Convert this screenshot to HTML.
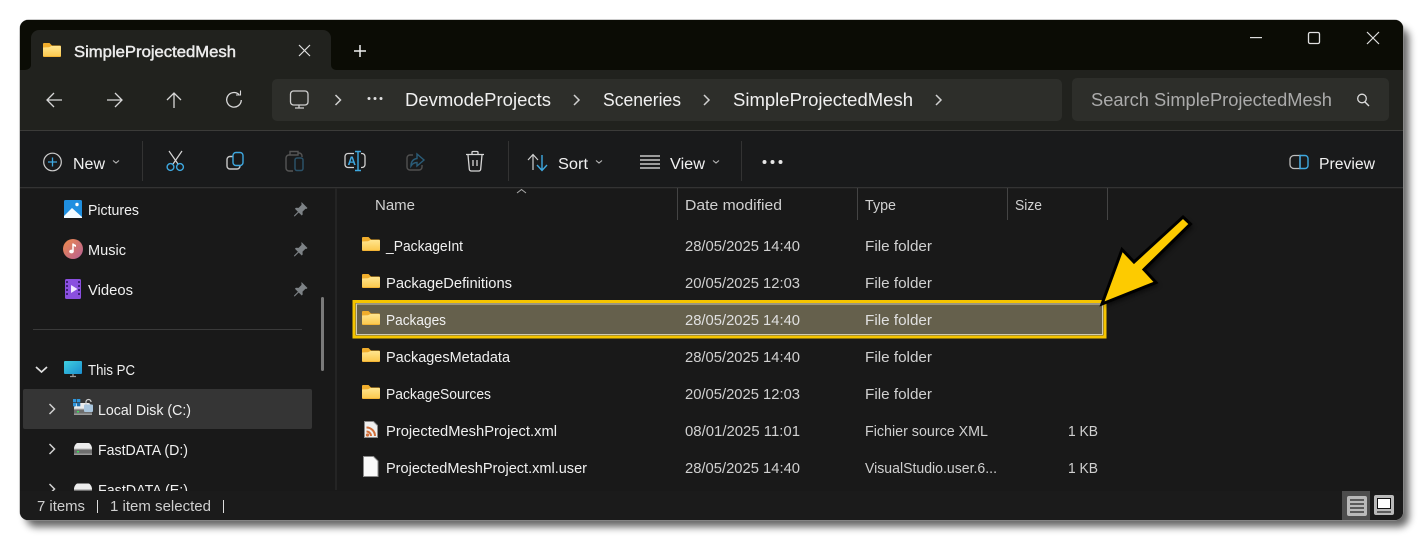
<!DOCTYPE html>
<html><head><meta charset="utf-8"><style>
html,body{margin:0;padding:0;background:#fff;width:1423px;height:540px;overflow:hidden}
svg{display:block}
text{font-family:"Liberation Sans",sans-serif;fill:#f0f0f0;font-size:14.5px}
.s{fill:none;stroke:#d8d8d8;stroke-width:1.3}
.b{fill:none;stroke:#3ea8e0;stroke-width:1.4}
.g{fill:#e0e0e0}
</style></head><body>
<svg width="1423" height="540" viewBox="0 0 1423 540" xmlns="http://www.w3.org/2000/svg">
<defs>
<filter id="sh" x="-5%" y="-5%" width="110%" height="112%"><feGaussianBlur stdDeviation="4"/></filter>
<filter id="as" x="-30%" y="-30%" width="160%" height="160%"><feGaussianBlur stdDeviation="2"/></filter>
<linearGradient id="fo" x1="0" y1="0" x2="0" y2="1"><stop offset="0" stop-color="#ffe58f"/><stop offset="1" stop-color="#fbc94f"/></linearGradient>
<linearGradient id="mu" x1="0" y1="0" x2="1" y2="1"><stop offset="0" stop-color="#ee8a4a"/><stop offset="1" stop-color="#b55f96"/></linearGradient>
<linearGradient id="pc" x1="0" y1="0" x2="1" y2="1"><stop offset="0" stop-color="#3fd0e0"/><stop offset="1" stop-color="#1b8fd0"/></linearGradient>
<g id="folder"><path d="M0 1a1 1 0 0 1 1-1h5.500l2.500 2.500h8a1 1 0 0 1 1 1v9.500a1 1 0 0 1-1 1H1a1 1 0 0 1-1-1z" fill="#f0ad2c"/><path d="M0 4.500l6-.2 2.500-1.300H17a1 1 0 0 1 1 1v9.200H0z" fill="url(#fo)"/></g>
<g id="pin"><path d="M7.500 0l6 6-1.200 1-.8-.2-3 3 .2 2.700-1 1-3-3-3.800 3.800-.9.1.1-.9 3.800-3.800-3-3 1-1 2.700.2 3-3-.2-.8z" fill="#7d8286"/></g>
<g id="drive"><path d="M3.500 0h11c1.500 0 3.500 3 3.500 5.500H0C0 3 2 0 3.500 0z" fill="#ececec"/><rect x="0" y="5.500" width="18" height="6.500" rx="1" fill="#6e6e6e"/><rect x="0" y="5.500" width="18" height="1" fill="#bdbdbd"/><rect x="3" y="8" width="2" height="1.500" fill="#3ddc5a"/><rect x="0" y="10.500" width="18" height="1.500" fill="#9a9a9a"/></g>
<path id="chev" d="M0 0l5 5-5 5" fill="none" stroke="#d0d0d0" stroke-width="1.500"/>
</defs>

<rect x="26" y="28" width="1383" height="499" rx="10" fill="#000" opacity=".6" filter="url(#sh)"/>
<rect x="19.500" y="19.500" width="1384" height="501" rx="9" fill="#9a9a9a"/>
<rect x="20" y="20" width="1383" height="500" rx="8" fill="#191919"/>
<path d="M20 70V28a8 8 0 0 1 8-8h1367a8 8 0 0 1 8 8v42z" fill="#0b0c05"/>
<rect x="20" y="70" width="1383" height="60" fill="#21221e"/>
<path d="M31 70V38a8 8 0 0 1 8-8h284a8 8 0 0 1 8 8v32z" fill="#21221e"/>
<path d="M25 70a6 5 0 0 0 6-5v5zM331 65a5 5 0 0 0 5 5h-5z" fill="#21221e"/>
<rect x="20" y="130" width="1383" height="1.300" fill="#3b3b39"/>
<rect x="20" y="131" width="1383" height="56" fill="#191a1b"/>
<rect x="20" y="187" width="1383" height="1.300" fill="#333"/>
<rect x="335" y="188" width="2" height="302" fill="#242424"/>

<!-- Tab -->
<use href="#folder" x="43" y="43"/>
<text x="74" y="57" textLength="162" lengthAdjust="spacingAndGlyphs" style="font-size:16px;fill:#ececec;stroke:#ececec;stroke-width:.45">SimpleProjectedMesh</text>
<path d="M299 45l11 11M310 45l-11 11" stroke="#e0e0e0" stroke-width="1.200"/>
<path d="M360 45v12M354 51h12" stroke="#eee" stroke-width="1.500"/>

<!-- Window controls -->
<rect x="1250" y="37" width="12" height="1.200" fill="#ddd"/>
<rect x="1308.500" y="32.500" width="11" height="11" rx="1.500" fill="none" stroke="#e0e0e0" stroke-width="1.300"/>
<path d="M1367 32l12 12M1379 32l-12 12" stroke="#e0e0e0" stroke-width="1.200"/>

<!-- Nav -->
<path d="M62 100H47M54 93l-7 7 7 7" class="s"/>
<path d="M107 100h15M115 93l7 7-7 7" class="s"/>
<path d="M174 108V93M167 100l7-7 7 7" class="s"/>
<path d="M239 94.500a7.300 7.300 0 1 0 2.300 5.500" class="s"/><path d="M240.500 90.500v4.500h-4.500" class="s" style="stroke-width:1.100"/>

<!-- Address -->
<rect x="272" y="79" width="790" height="42" rx="5" fill="#2d2e2a"/>
<rect x="290.500" y="91" width="17.500" height="14" rx="3" class="s" style="stroke:#cfcfcf"/>
<path d="M295 108h9M299 105v3" class="s" style="stroke:#cfcfcf"/>
<use href="#chev" x="335.500" y="95"/>
<circle cx="369" cy="98.500" r="1.500" class="g"/><circle cx="375" cy="98.500" r="1.500" class="g"/><circle cx="381" cy="98.500" r="1.500" class="g"/>
<text x="405" y="106" textLength="146" lengthAdjust="spacingAndGlyphs" style="font-size:18px">DevmodeProjects</text>
<use href="#chev" x="574" y="95"/>
<text x="603" y="106" textLength="78" lengthAdjust="spacingAndGlyphs" style="font-size:18px">Sceneries</text>
<use href="#chev" x="704" y="95"/>
<text x="733" y="106" textLength="180" lengthAdjust="spacingAndGlyphs" style="font-size:18px">SimpleProjectedMesh</text>
<use href="#chev" x="936" y="95"/>

<!-- Search -->
<rect x="1072" y="78" width="317" height="43" rx="5" fill="#2d2e2a"/>
<text x="1091" y="106" textLength="241" lengthAdjust="spacingAndGlyphs" style="font-size:18px;fill:#ababab">Search SimpleProjectedMesh</text>
<circle cx="1362" cy="98.500" r="4.300" fill="none" stroke="#ddd" stroke-width="1.300"/><path d="M1365 102l4 4" stroke="#ddd" stroke-width="1.400"/>

<!-- Command bar -->
<circle cx="52.500" cy="162" r="8.800" fill="none" stroke="#cfcfcf" stroke-width="1.200"/>
<path d="M52.500 157.500v9M48 162h9" stroke="#3ea8e0" stroke-width="1.300"/>
<text x="73" y="169" textLength="32" lengthAdjust="spacingAndGlyphs" style="font-size:15.500px">New</text>
<path d="M113 160.500l3 2.500 3-2.500" fill="none" stroke="#bbb" stroke-width="1.100"/>
<rect x="142" y="141" width="1" height="40" fill="#333"/>

<path d="M169 151l9 13M182 151l-9 13" stroke="#d6d6d6" stroke-width="1.200"/>
<circle cx="170.500" cy="167" r="3.400" class="b"/><circle cx="180" cy="167" r="3.400" class="b"/>

<path d="M233 156.500h-3a3 3 0 0 0-3 3v6.500a3 3 0 0 0 3 3h7a3 3 0 0 0 3-3" fill="none" stroke="#c8c8c8" stroke-width="1.400"/>
<rect x="233" y="152.500" width="10" height="13" rx="3" class="b"/>

<path d="M291 155h-2a3 3 0 0 0-3 3v10a3 3 0 0 0 3 3h4M302 157v-1a3 3 0 0 0-3-3h-1M290 155v-3.500h8v3.500z" fill="none" stroke="#555" stroke-width="1.400"/>
<rect x="295" y="158" width="8" height="12.500" rx="2" fill="none" stroke="#2a5168" stroke-width="1.500"/>

<path d="M354 153.500h-6a3 3 0 0 0-3 3v8a3 3 0 0 0 3 3h6M361 153.500h1a3 3 0 0 1 3 3v8a3 3 0 0 1-3 3h-1" fill="none" stroke="#d0d0d0" stroke-width="1.300"/>
<path d="M358 152v18M355 151.500h6M355 170.500h6" stroke="#3ea8e0" stroke-width="1.400" fill="none"/>
<text x="347.500" y="165" textLength="8.500" lengthAdjust="spacingAndGlyphs" style="font-size:12px;font-weight:bold;fill:#3ea8e0">A</text>

<path d="M413 155h-3a3 3 0 0 0-3 3v9a3 3 0 0 0 3 3h9a3 3 0 0 0 3-3v-2" fill="none" stroke="#505050" stroke-width="1.400"/>
<path d="M411 166c0-5 3-7 6-7.500v-4.500l7 6-7 6v-3.500c-2.500 0-4.500 1-6 3.500z" fill="none" stroke="#2a5c78" stroke-width="1.400"/>

<path d="M466 154.500h18M472 154.500v-2a1 1 0 0 1 1-1h4a1 1 0 0 1 1 1v2M468 155l1.300 14a2 2 0 0 0 2 2h7.400a2 2 0 0 0 2-2l1.300-14M473 160v6M477 160v6" fill="none" stroke="#d6d6d6" stroke-width="1.300"/>
<rect x="508" y="141" width="1" height="40" fill="#333"/>

<path d="M533 170v-15M528 160l5-5.500 5 5.500" fill="none" stroke="#d0d0d0" stroke-width="1.200"/>
<path d="M542 155v15M537 165l5 5.500 5-5.500" fill="none" stroke="#3ea8e0" stroke-width="1.400"/>
<text x="558" y="169" textLength="30" lengthAdjust="spacingAndGlyphs" style="font-size:15.500px">Sort</text>
<path d="M596 160.500l3 2.500 3-2.500" fill="none" stroke="#bbb" stroke-width="1.100"/>
<path d="M640 156h20M640 160h20M640 164h20M640 168h20" stroke="#c8c8c8" stroke-width="1.500"/>
<text x="670" y="169" textLength="35" lengthAdjust="spacingAndGlyphs" style="font-size:15.500px">View</text>
<path d="M713 160.500l3 2.500 3-2.500" fill="none" stroke="#bbb" stroke-width="1.100"/>
<rect x="741" y="141" width="1" height="40" fill="#333"/>
<circle cx="764.500" cy="162" r="2" fill="#e6e6e6"/><circle cx="772.500" cy="162" r="2" fill="#e6e6e6"/><circle cx="780.500" cy="162" r="2" fill="#e6e6e6"/>

<path d="M1300 155.500h-6a4 4 0 0 0-4 4v5a4 4 0 0 0 4 4h6z" fill="none" stroke="#bdbdbd" stroke-width="1.300"/>
<path d="M1300 155.500h5a3 3 0 0 1 3 3v7a3 3 0 0 1-3 3h-5z" fill="none" stroke="#3ea8e0" stroke-width="1.400"/>
<text x="1319" y="169" textLength="56" lengthAdjust="spacingAndGlyphs" style="font-size:15.500px">Preview</text>

<!-- Sidebar -->
<rect x="64" y="200" width="18" height="18" rx="1.500" fill="#1f8fe0"/>
<path d="M64 218v-2l8-8 10 9v1z" fill="#f4fbff"/><circle cx="77" cy="204.500" r="1.700" fill="#fff"/>
<text x="88" y="215" textLength="51" lengthAdjust="spacingAndGlyphs">Pictures</text>
<use href="#pin" x="294" y="202"/>
<circle cx="73" cy="249" r="10" fill="url(#mu)"/>
<path d="M73 243.500v8" stroke="#fff" stroke-width="1.500"/><ellipse cx="71.500" cy="251.500" rx="2.300" ry="1.900" fill="#fff"/><path d="M73 243.500l3 1.500v2l-3-1.200z" fill="#fff"/>
<text x="88" y="255" textLength="38" lengthAdjust="spacingAndGlyphs">Music</text>
<use href="#pin" x="294" y="242"/>
<rect x="65" y="279" width="16" height="20" rx="1.500" fill="#8a4fdf"/>
<path d="M71 285l6.500 4-6.500 4z" fill="#f0e6ff"/>
<path d="M67 281v16M79 281v16" stroke="#3f1f7a" stroke-width="2" stroke-dasharray="2 2"/>
<text x="88" y="295" textLength="45" lengthAdjust="spacingAndGlyphs">Videos</text>
<use href="#pin" x="294" y="282"/>
<rect x="33" y="329" width="269" height="1" fill="#3a3a3a"/>
<rect x="321" y="297" width="3" height="74" rx="1.500" fill="#7a7a7a"/>
<path d="M36 367l5.500 5 5.500-5" fill="none" stroke="#e0e0e0" stroke-width="1.700"/>
<rect x="64" y="361" width="18" height="13" rx="1" fill="url(#pc)"/><path d="M70 376.500h6M73 374v2.500" stroke="#9a9a9a" stroke-width="1.300"/>
<text x="88" y="375" textLength="47" lengthAdjust="spacingAndGlyphs" style="font-size:15px">This PC</text>
<rect x="23" y="389" width="289" height="40" rx="2" fill="#353535"/>
<use href="#chev" x="49.500" y="404"/>
<use href="#drive" x="74" y="403"/>
<rect x="73" y="399" width="3.300" height="3.300" fill="#2f96dc"/><rect x="77" y="399" width="3.300" height="3.300" fill="#2f96dc"/><rect x="73" y="403" width="3.300" height="3.300" fill="#2f96dc"/><rect x="77" y="403" width="3.300" height="3.300" fill="#1b6fb0"/>
<path d="M86 405v-3a2.500 2.500 0 0 1 5 0" fill="none" stroke="#cfcfcf" stroke-width="1.200"/><rect x="84" y="404.500" width="9" height="7.500" rx="1" fill="#a9c6de"/>
<text x="98" y="415" textLength="93" lengthAdjust="spacingAndGlyphs">Local Disk (C:)</text>
<use href="#chev" x="49.500" y="444"/>
<use href="#drive" x="74" y="443"/>
<text x="98" y="455" textLength="90" lengthAdjust="spacingAndGlyphs">FastDATA (D:)</text>
<use href="#chev" x="49.500" y="484"/>
<use href="#drive" x="74" y="483.500"/>
<text x="98" y="495" textLength="90" lengthAdjust="spacingAndGlyphs">FastDATA (E:)</text>

<!-- Headers -->
<path d="M517 193l4.500-3.500 4.500 3.500" fill="none" stroke="#aaa" stroke-width="1"/>
<text x="375" y="210" textLength="40" lengthAdjust="spacingAndGlyphs" style="fill:#d0d0d0">Name</text>
<rect x="677" y="188" width="1" height="32" fill="#444"/>
<text x="685" y="210" textLength="97" lengthAdjust="spacingAndGlyphs" style="fill:#d0d0d0">Date modified</text>
<rect x="857" y="188" width="1" height="32" fill="#444"/>
<text x="865" y="210" textLength="31" lengthAdjust="spacingAndGlyphs" style="fill:#d0d0d0">Type</text>
<rect x="1007" y="188" width="1" height="32" fill="#444"/>
<text x="1015" y="210" textLength="27" lengthAdjust="spacingAndGlyphs" style="fill:#d0d0d0">Size</text>
<rect x="1107" y="188" width="1" height="32" fill="#444"/>

<!-- Highlight -->
<rect x="354" y="301.500" width="751" height="35.500" fill="#65604c" stroke="#f5c400" stroke-width="3"/>
<rect x="356.500" y="304" width="746" height="30.500" fill="none" stroke="#cfcab4" stroke-width="1"/>

<!-- Rows -->
<use href="#folder" x="362" y="237"/>
<text x="386" y="251" textLength="77" lengthAdjust="spacingAndGlyphs">_PackageInt</text>
<text x="685" y="251" textLength="115" lengthAdjust="spacingAndGlyphs" style="fill:#d0d0d0">28/05/2025 14:40</text>
<text x="865" y="251" textLength="67" lengthAdjust="spacingAndGlyphs" style="fill:#d0d0d0">File folder</text>

<use href="#folder" x="362" y="274"/>
<text x="386" y="288" textLength="126" lengthAdjust="spacingAndGlyphs">PackageDefinitions</text>
<text x="685" y="288" textLength="115" lengthAdjust="spacingAndGlyphs" style="fill:#d0d0d0">20/05/2025 12:03</text>
<text x="865" y="288" textLength="67" lengthAdjust="spacingAndGlyphs" style="fill:#d0d0d0">File folder</text>

<use href="#folder" x="362" y="311"/>
<text x="386" y="325" textLength="60" lengthAdjust="spacingAndGlyphs">Packages</text>
<text x="685" y="325" textLength="115" lengthAdjust="spacingAndGlyphs" style="fill:#e0e0e0">28/05/2025 14:40</text>
<text x="865" y="325" textLength="67" lengthAdjust="spacingAndGlyphs" style="fill:#e0e0e0">File folder</text>

<use href="#folder" x="362" y="348"/>
<text x="386" y="362" textLength="124" lengthAdjust="spacingAndGlyphs">PackagesMetadata</text>
<text x="685" y="362" textLength="115" lengthAdjust="spacingAndGlyphs" style="fill:#d0d0d0">28/05/2025 14:40</text>
<text x="865" y="362" textLength="67" lengthAdjust="spacingAndGlyphs" style="fill:#d0d0d0">File folder</text>

<use href="#folder" x="362" y="385"/>
<text x="386" y="399" textLength="105" lengthAdjust="spacingAndGlyphs">PackageSources</text>
<text x="685" y="399" textLength="115" lengthAdjust="spacingAndGlyphs" style="fill:#d0d0d0">20/05/2025 12:03</text>
<text x="865" y="399" textLength="67" lengthAdjust="spacingAndGlyphs" style="fill:#d0d0d0">File folder</text>

<path d="M364.500 421.500h9l4 4v12h-13z" fill="#efefef" stroke="#8a8a8a"/>
<path d="M366.500 427.500a8.500 8.500 0 0 1 8.500 8.500M366.500 431.500a4.500 4.500 0 0 1 4.500 4.500" fill="none" stroke="#d2703a" stroke-width="2"/><circle cx="367.500" cy="435" r="1.600" fill="#d2703a"/>
<text x="386" y="436" textLength="171" lengthAdjust="spacingAndGlyphs">ProjectedMeshProject.xml</text>
<text x="685" y="436" textLength="115" lengthAdjust="spacingAndGlyphs" style="fill:#d0d0d0">08/01/2025 11:01</text>
<text x="865" y="436" textLength="123" lengthAdjust="spacingAndGlyphs" style="fill:#d0d0d0">Fichier source XML</text>
<text x="1068" y="436" textLength="30" lengthAdjust="spacingAndGlyphs" style="fill:#d0d0d0">1 KB</text>

<path d="M363.500 456.500h10l4.500 4.500v15.500h-14.500z" fill="#fafafa" stroke="#8a8a8a"/>
<text x="386" y="473" textLength="201" lengthAdjust="spacingAndGlyphs">ProjectedMeshProject.xml.user</text>
<text x="685" y="473" textLength="115" lengthAdjust="spacingAndGlyphs" style="fill:#d0d0d0">28/05/2025 14:40</text>
<text x="865" y="473" textLength="132" lengthAdjust="spacingAndGlyphs" style="fill:#d0d0d0">VisualStudio.user.6...</text>
<text x="1068" y="473" textLength="30" lengthAdjust="spacingAndGlyphs" style="fill:#d0d0d0">1 KB</text>

<!-- Arrow -->
<path d="M1183 217l7.500 7-46.500 45.500 12 13-54 21.500 20-54.500 12 12.500z" fill="#000" opacity=".5" transform="translate(3 3)" filter="url(#as)"/>
<path d="M1183 217l7.500 7-46.500 45.500 12 13-54 21.500 20-54.500 12 12.500z" fill="#fdcb00" stroke="#000" stroke-width="3" stroke-linejoin="miter"/>

<!-- Status -->
<path d="M20 491h1383v21a8 8 0 0 1-8 8H28a8 8 0 0 1-8-8z" fill="#1b1b1b"/>
<text x="37" y="511" textLength="48" lengthAdjust="spacingAndGlyphs" style="fill:#cfcfcf">7 items</text>
<rect x="97" y="500" width="1" height="13" fill="#ddd"/>
<text x="110" y="511" textLength="101" lengthAdjust="spacingAndGlyphs" style="fill:#cfcfcf">1 item selected</text>
<rect x="223" y="500" width="1" height="13" fill="#ddd"/>
<rect x="1342" y="491" width="28" height="29" fill="#4d4d4d"/>
<rect x="1347" y="496" width="20" height="20" rx="2" fill="#b9b9b9"/>
<path d="M1350 500h14M1350 504h14M1350 508h14M1350 512h14" stroke="#222" stroke-width="1.200"/>
<rect x="1374" y="495" width="20" height="20" rx="2" fill="#b9b9b9"/>
<rect x="1377.500" y="498.500" width="13" height="10" fill="#fff" stroke="#111" stroke-width="1"/>
<path d="M1377 512h14" stroke="#222" stroke-width="1.200"/>
</svg>
</body></html>
